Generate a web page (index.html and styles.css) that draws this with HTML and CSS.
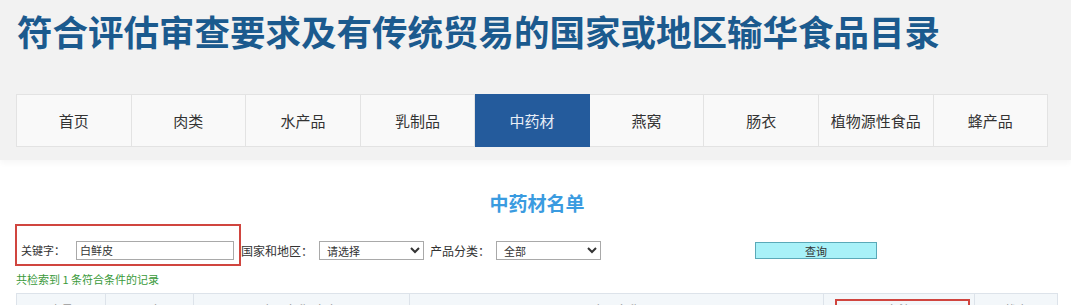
FILE: index.html
```html
<!DOCTYPE html>
<html lang="zh-CN">

<head>
  <meta charset="UTF-8">
  <title>符合评估审查要求及有传统贸易的国家或地区输华食品目录</title>
  <link rel="stylesheet" href="styles.css">
</head>

<body>
  <div class="header">
    <h1>符合评估审查要求及有传统贸易的国家或地区输华食品目录</h1>

    <!-- 分类导航 -->
    <ul class="nav">
      <li>首页</li>
      <li>肉类</li>
      <li>水产品</li>
      <li>乳制品</li>
      <li class="active">中药材</li>
      <li>燕窝</li>
      <li>肠衣</li>
      <li>植物源性食品</li>
      <li>蜂产品</li>
    </ul>
  </div>

  <div class="main">
    <h2>中药材名单</h2>

    <!-- 查询条件 -->
    <form class="search" onsubmit="event.preventDefault();">
      <div class="kw-box">
        <label>关键字：</label>
        <input class="kw" value="白鲜皮">
      </div>
      <div class="filters">
        <label class="lbl">国家和地区：</label>
        <select class="sel">
          <option>请选择</option>
        </select>
        <label class="lbl">产品分类：</label>
        <select class="sel">
          <option>全部</option>
        </select>
        <button type="submit">查询</button>
      </div>
    </form>

    <div class="count">共检索到 1 条符合条件的记录</div>

    <table>
      <thead>
        <tr>
          <th class="c1">序号</th>
          <th class="c2">国家</th>
          <th class="c3">产品名称(中文)</th>
          <th class="c4">产品名称</th>
          <th class="c5"><span class="mark">备注</span></th>
          <th class="c6">状态</th>
        </tr>
      </thead>
      <tbody>
        <!-- 数据行 -->
      </tbody>
    </table>
  </div>
</body>

</html>
```

FILE: styles.css
```css
body {
  margin: 0;
  font-family: "Noto Sans CJK SC", sans-serif;
  background-color: #fff;
  color: #333;
  overflow: hidden;
}

.header {
  background-color: #f2f2f2;
  height: 160px;
  box-shadow: 0 3px 6px rgba(0, 0, 0, 0.04);
  overflow: hidden;
}

h1 {
  margin: 0;
  padding: 7px 0 0 17px;
  font-size: 35.5px;
  line-height: 48px;
  font-weight: bold;
  color: #1b5a8e;
}

.nav {
  list-style: none;
  margin: 39px 0 0 16px;
  padding: 0;
  display: flex;
  width: 1032px;
}

.nav li {
  flex: 1;
  height: 51px;
  line-height: 51px;
  text-align: center;
  font-size: 15px;
  color: #333;
  background-color: #f9f9f9;
  border: 1px solid #e3e3e3;
  border-left: none;
}

.nav li:first-child {
  border-left: 1px solid #e3e3e3;
}

.nav li.active {
  background-color: #245b9c;
  border-color: #245b9c;
  color: #e8eef6;
}

.main {
  padding: 0 13px 0 16px;
}

h2 {
  margin: 30px 0 0;
  text-align: center;
  font-size: 19px;
  line-height: 26px;
  font-weight: bold;
  color: #3a9be0;
}

.search {
  display: flex;
  align-items: flex-start;
  margin-top: 8px;
  font-size: 12px;
  color: #333;
}

.kw-box {
  width: 226px;
  height: 42px;
  margin-left: -1px;
  padding: 10px 0 0 4px;
  border: 2px solid #d0453f;
  box-sizing: border-box;
  display: flex;
  align-items: center;
}

.kw-box label {
  width: 55px;
  font-size: 11px;
}

.kw,
.sel {
  height: 19px;
  box-sizing: border-box;
  border: 1px solid #a9a9a9;
  font-family: "Noto Sans CJK SC", sans-serif;
  font-size: 11px;
  padding: 0 3px;
  color: #333;
  background-color: #fff;
}

.kw {
  width: 158px;
}

.filters {
  display: flex;
  align-items: center;
  height: 19px;
  margin-top: 17px;
}

.lbl {
  margin-left: 6px;
}

.filters .lbl:first-child {
  margin-left: 0;
}

.sel {
  width: 105px;
  margin-left: 6px;
}

.filters button {
  margin-left: 154px;
  width: 122px;
  height: 17px;
  padding: 0;
  background-color: #a8f1f8;
  border: 1px solid #5aa9b8;
  font-family: "Noto Sans CJK SC", sans-serif;
  font-size: 11px;
  color: #333;
  cursor: pointer;
}

.count {
  margin-top: 5px;
  font-size: 11px;
  line-height: 16px;
  color: #3a9a3a;
}

table {
  margin-top: 6px;
  border-collapse: collapse;
  width: 1042px;
}

th {
  height: 26px;
  padding: 8px 0 0;
  background-color: #f3f7fa;
  border: 1px solid #dde3ea;
  font-size: 12px;
  line-height: 16px;
  font-weight: normal;
  color: #999;
  vertical-align: top;
}

.c1 { width: 89px; }
.c2 { width: 87px; }
.c3 { width: 217px; }
.c4 { width: 415px; }
.c5 { width: 152px; position: relative; }
.c6 { width: 82px; }

.mark::before {
  content: "";
  position: absolute;
  left: 11px;
  right: 4px;
  top: 5px;
  bottom: -10px;
  border: 2px solid #d0453f;
}
```
